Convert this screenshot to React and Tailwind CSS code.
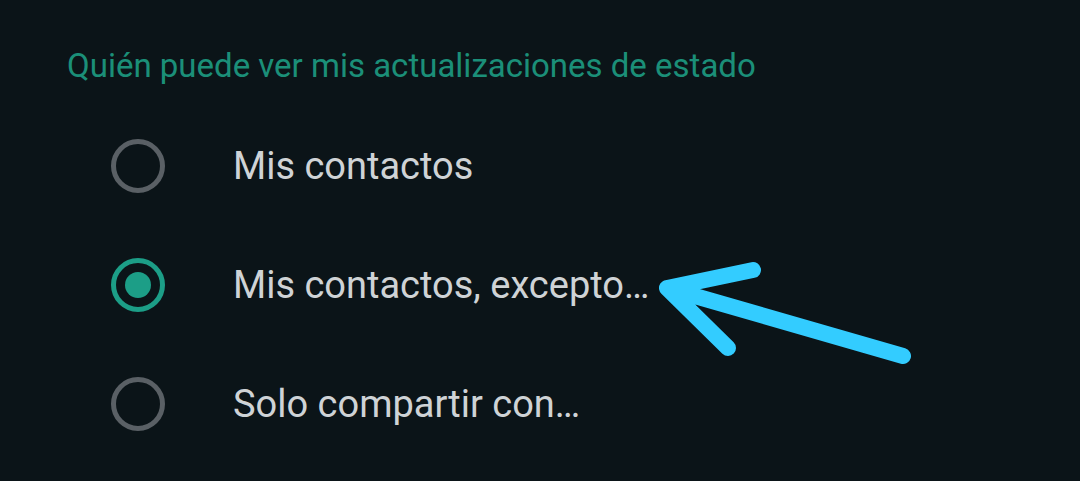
import { useState } from 'react'

const options = ['Mis contactos', 'Mis contactos, excepto…', 'Solo compartir con…']

function Radio({ checked }) {
  return (
    <span
      className={`flex h-[54px] w-[54px] shrink-0 items-center justify-center rounded-full border-[5px] ${
        checked ? 'border-[#1c9e87]' : 'border-[#5a6065]'
      }`}
    >
      {checked && <span className="h-[26px] w-[26px] rounded-full bg-[#1c9e87]" />}
    </span>
  )
}

export default function App() {
  const [selected, setSelected] = useState(1)

  return (
    <div
      className="relative h-[481px] w-[1080px] overflow-hidden bg-[#0b1418]"
      style={{ fontFamily: 'Roboto, "Noto Sans", sans-serif' }}
    >
      <div className="pl-[67px] pt-[46px]">
        <h2 className="text-[33px] leading-[40px] text-[#1b8f78]">
          Quién puede ver mis actualizaciones de estado
        </h2>
        <ul className="mt-[53px] flex flex-col gap-[65px] pl-[44px]">
          {options.map((label, i) => (
            <li
              key={label}
              className="flex h-[54px] cursor-pointer items-center gap-[68px]"
              onClick={() => setSelected(i)}
            >
              <Radio checked={selected === i} />
              <span className="text-[38px] leading-none text-[#cfd3d6]">{label}</span>
            </li>
          ))}
        </ul>
      </div>

      {/* callout arrow pointing at the selected option */}
      <svg
        className="pointer-events-none absolute left-0 top-0"
        width="1080"
        height="481"
        viewBox="0 0 1080 481"
        fill="none"
      >
        <path
          d="M753 270 L667 288 L728 348 M667 288 L903 356"
          stroke="#33ccff"
          strokeWidth="16"
          strokeLinecap="round"
          strokeLinejoin="round"
        />
      </svg>
    </div>
  )
}
